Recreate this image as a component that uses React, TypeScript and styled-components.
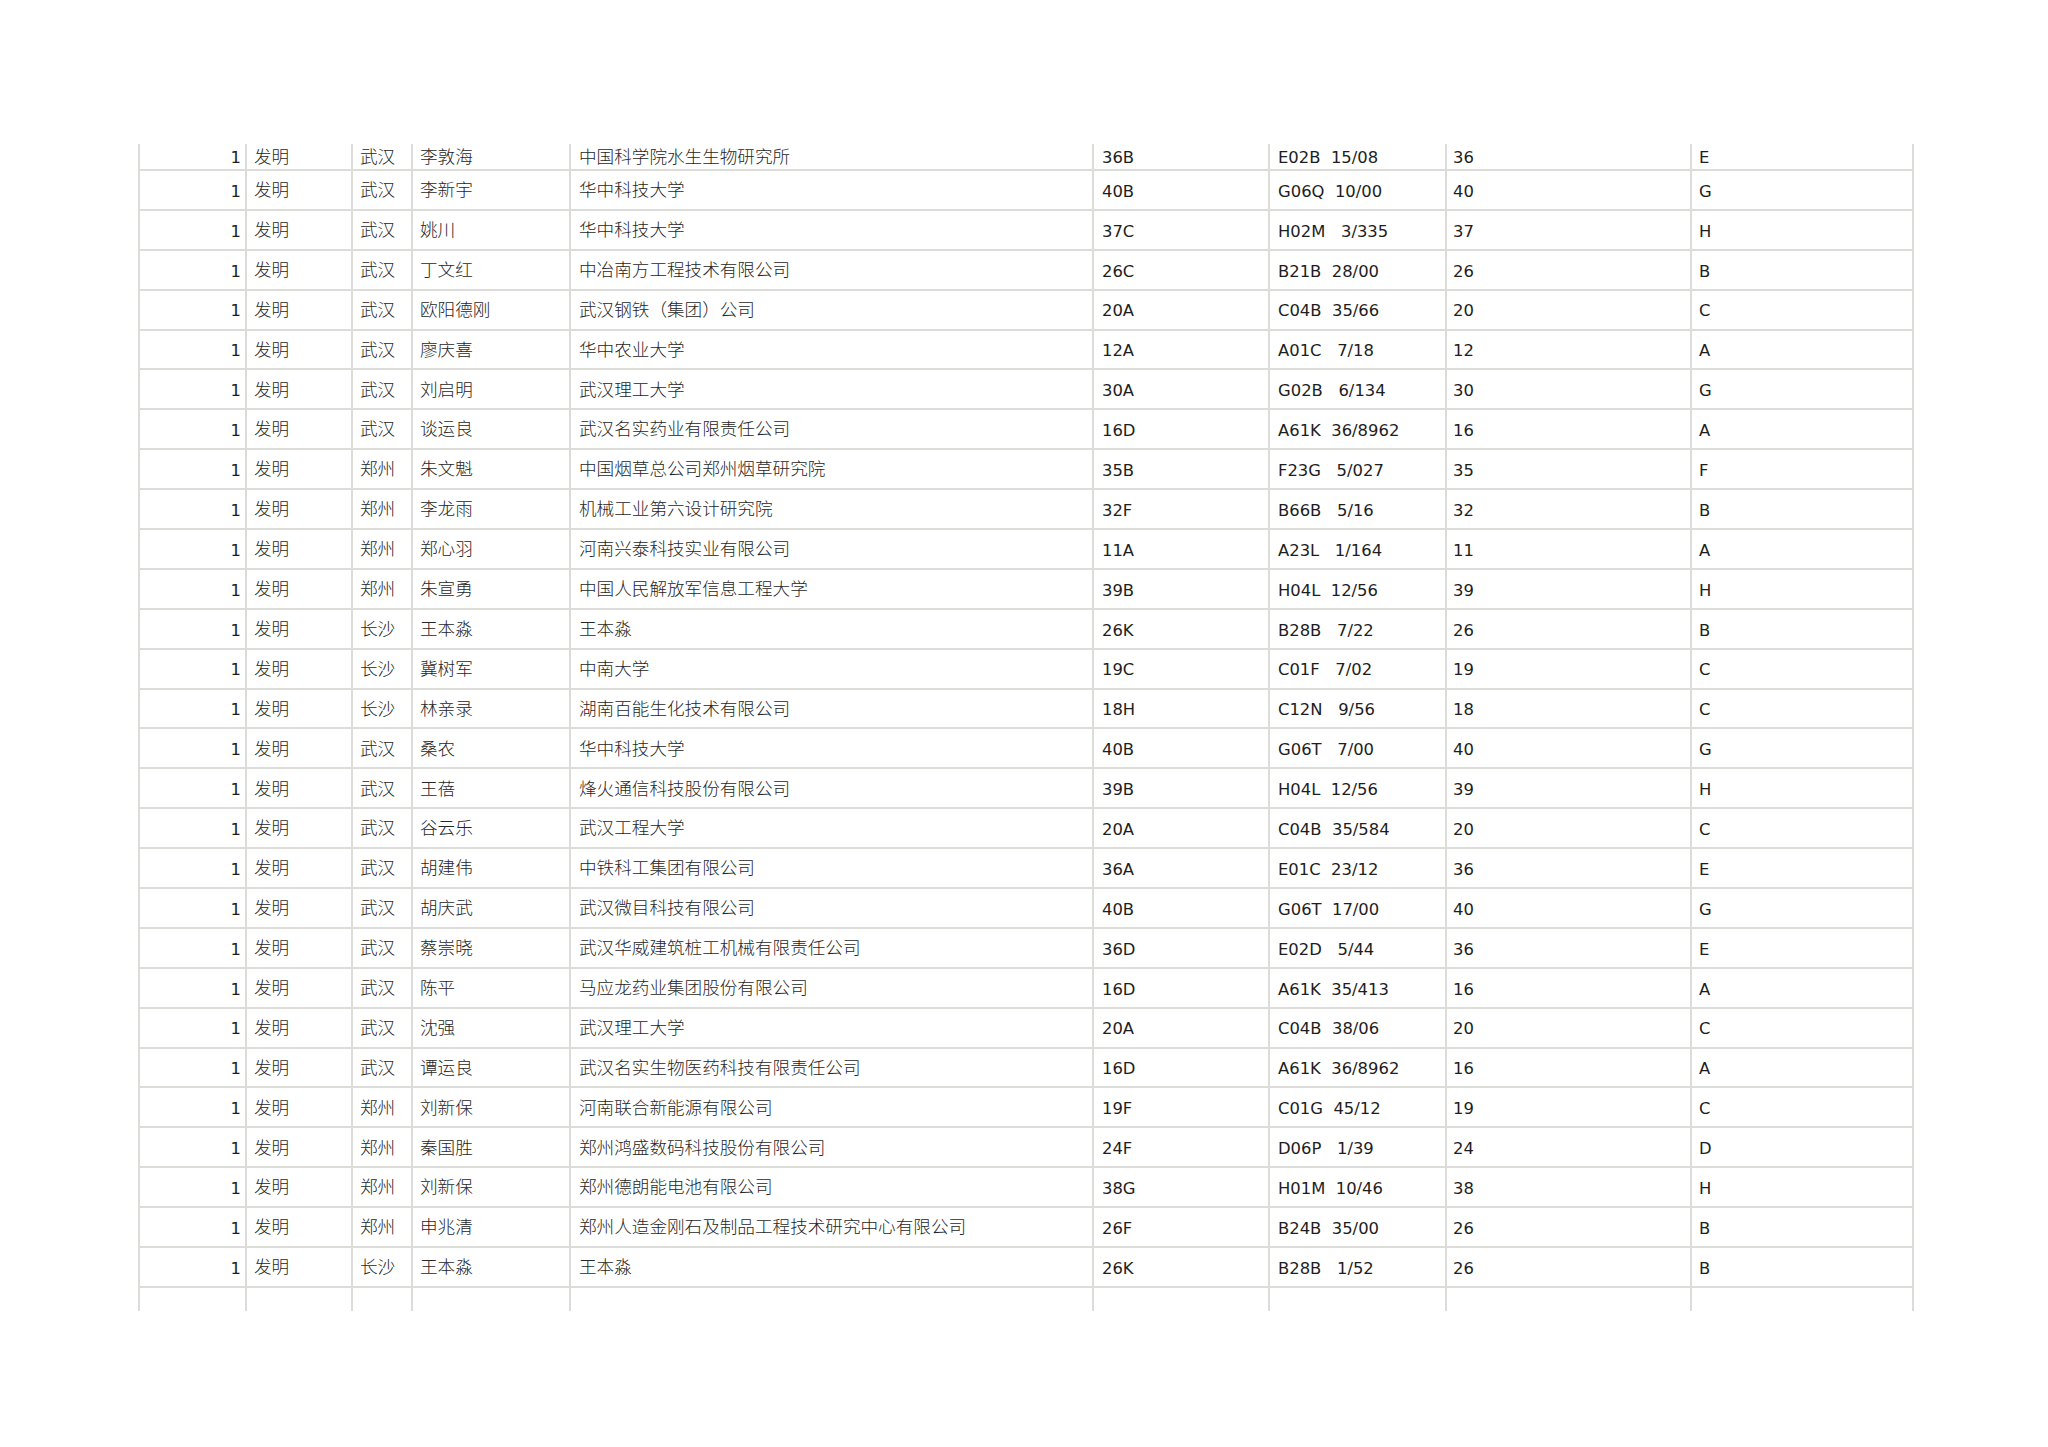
import React from "react";
import styled, { createGlobalStyle } from "styled-components";

const Global = createGlobalStyle`
  html, body { margin: 0; padding: 0; background: #ffffff; }
  body { width: 2048px; height: 1447px; overflow: hidden; }
`;

const COLS = "107px 106px 60px 158px 523px 176px 177px 245px 222px";
const LINE = "#dcdcd8";

const Sheet = styled.div`
  padding: 144px 0 0 138px;
  font-family: "DejaVu Sans", "Noto Sans CJK SC", sans-serif;
  font-size: 16px;
  color: #1e1e1e;
`;

const Table = styled.div`
  display: flex;
  flex-direction: column;
  width: 1776px;
`;

const Row = styled.div<{ $h: number; $last?: boolean }>`
  display: grid;
  grid-template-columns: ${COLS};
  height: ${(p) => p.$h}px;
  box-sizing: border-box;
  border-bottom: ${(p) => (p.$last ? "none" : `2px solid ${LINE}`)};
  border-right: 2px solid ${LINE};
`;

const Cell = styled.div<{ $right?: boolean; $cjk?: boolean; $pad?: number }>`
  border-left: 2px solid ${LINE};
  display: flex;
  align-items: center;
  justify-content: ${(p) => (p.$right ? "flex-end" : "flex-start")};
  padding-top: ${(p) => (p.$cjk ? "0" : "4px")};
  padding-bottom: ${(p) => (p.$cjk ? "2px" : "0")};
  padding-left: ${(p) => (p.$right ? "0" : `${p.$pad ?? 7}px`)};
  padding-right: ${(p) => (p.$right ? "4px" : "0")};
  white-space: pre;
  overflow: hidden;
  font-family: ${(p) =>
    p.$cjk ? `"Noto Sans CJK SC", sans-serif` : `"DejaVu Sans", sans-serif`};
  font-size: ${(p) => (p.$cjk ? "17.6px" : "16.4px")};
  font-weight: ${(p) => (p.$cjk ? 300 : 400)};
  color: ${(p) => (p.$cjk ? "#262626" : "#1e1e1e")};
  line-height: 1;
`;

type Rec = [string, string, string, string, string, string, string, string];

const rows: Rec[] = [
  ["发明", "武汉", "李敦海", "中国科学院水生生物研究所", "36B", "E02B  15/08", "36", "E"],
  ["发明", "武汉", "李新宇", "华中科技大学", "40B", "G06Q  10/00", "40", "G"],
  ["发明", "武汉", "姚川", "华中科技大学", "37C", "H02M   3/335", "37", "H"],
  ["发明", "武汉", "丁文红", "中冶南方工程技术有限公司", "26C", "B21B  28/00", "26", "B"],
  ["发明", "武汉", "欧阳德刚", "武汉钢铁（集团）公司", "20A", "C04B  35/66", "20", "C"],
  ["发明", "武汉", "廖庆喜", "华中农业大学", "12A", "A01C   7/18", "12", "A"],
  ["发明", "武汉", "刘启明", "武汉理工大学", "30A", "G02B   6/134", "30", "G"],
  ["发明", "武汉", "谈运良", "武汉名实药业有限责任公司", "16D", "A61K  36/8962", "16", "A"],
  ["发明", "郑州", "朱文魁", "中国烟草总公司郑州烟草研究院", "35B", "F23G   5/027", "35", "F"],
  ["发明", "郑州", "李龙雨", "机械工业第六设计研究院", "32F", "B66B   5/16", "32", "B"],
  ["发明", "郑州", "郑心羽", "河南兴泰科技实业有限公司", "11A", "A23L   1/164", "11", "A"],
  ["发明", "郑州", "朱宣勇", "中国人民解放军信息工程大学", "39B", "H04L  12/56", "39", "H"],
  ["发明", "长沙", "王本淼", "王本淼", "26K", "B28B   7/22", "26", "B"],
  ["发明", "长沙", "冀树军", "中南大学", "19C", "C01F   7/02", "19", "C"],
  ["发明", "长沙", "林亲录", "湖南百能生化技术有限公司", "18H", "C12N   9/56", "18", "C"],
  ["发明", "武汉", "桑农", "华中科技大学", "40B", "G06T   7/00", "40", "G"],
  ["发明", "武汉", "王蓓", "烽火通信科技股份有限公司", "39B", "H04L  12/56", "39", "H"],
  ["发明", "武汉", "谷云乐", "武汉工程大学", "20A", "C04B  35/584", "20", "C"],
  ["发明", "武汉", "胡建伟", "中铁科工集团有限公司", "36A", "E01C  23/12", "36", "E"],
  ["发明", "武汉", "胡庆武", "武汉微目科技有限公司", "40B", "G06T  17/00", "40", "G"],
  ["发明", "武汉", "蔡崇晓", "武汉华威建筑桩工机械有限责任公司", "36D", "E02D   5/44", "36", "E"],
  ["发明", "武汉", "陈平", "马应龙药业集团股份有限公司", "16D", "A61K  35/413", "16", "A"],
  ["发明", "武汉", "沈强", "武汉理工大学", "20A", "C04B  38/06", "20", "C"],
  ["发明", "武汉", "谭运良", "武汉名实生物医药科技有限责任公司", "16D", "A61K  36/8962", "16", "A"],
  ["发明", "郑州", "刘新保", "河南联合新能源有限公司", "19F", "C01G  45/12", "19", "C"],
  ["发明", "郑州", "秦国胜", "郑州鸿盛数码科技股份有限公司", "24F", "D06P   1/39", "24", "D"],
  ["发明", "郑州", "刘新保", "郑州德朗能电池有限公司", "38G", "H01M  10/46", "38", "H"],
  ["发明", "郑州", "申兆清", "郑州人造金刚石及制品工程技术研究中心有限公司", "26F", "B24B  35/00", "26", "B"],
  ["发明", "长沙", "王本淼", "王本淼", "26K", "B28B   1/52", "26", "B"],
];

export default function App() {
  return (
    <>
      <Global />
      <Sheet>
        <Table>
          {rows.map((r, i) => (
            <Row key={i} $h={i === 0 ? 27 : 39.9}>
              <Cell $right>1</Cell>
              <Cell $cjk>{r[0]}</Cell>
              <Cell $cjk>{r[1]}</Cell>
              <Cell $cjk>{r[2]}</Cell>
              <Cell $cjk $pad={8}>{r[3]}</Cell>
              <Cell $pad={8}>{r[4]}</Cell>
              <Cell $pad={8}>{r[5]}</Cell>
              <Cell $pad={6}>{r[6]}</Cell>
              <Cell>{r[7]}</Cell>
            </Row>
          ))}
          <Row $h={23} $last>
            {Array.from({ length: 9 }).map((_, k) => (
              <Cell key={k} />
            ))}
          </Row>
        </Table>
      </Sheet>
    </>
  );
}
